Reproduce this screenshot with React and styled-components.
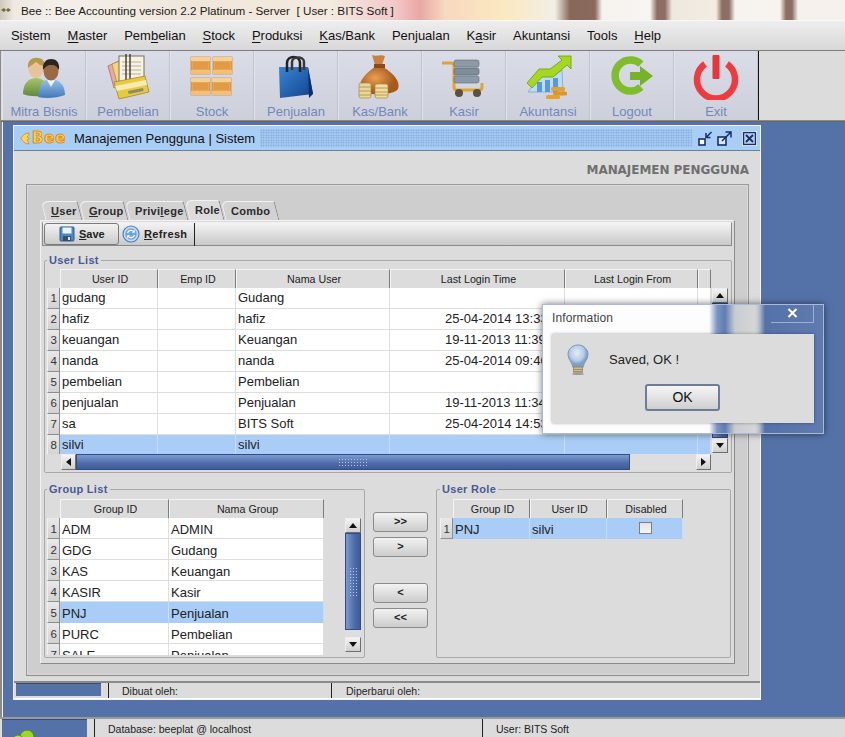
import React from 'react'
import styled, {createGlobalStyle} from 'styled-components'

const GlobalStyle = createGlobalStyle`
  html, body { margin: 0; padding: 0; background: #5572a8; }
  * { box-sizing: border-box; }
  body { font-family: "Liberation Sans", Arial, sans-serif; }
`

const Page = styled.div`
  position: relative;
  width: 845px;
  height: 737px;
  overflow: hidden;
  display: flex;
  flex-direction: column;
  background: #5572a8;
`

const TitleBar = styled.div`
  height: 20px;
  flex: none;
  display: flex;
  align-items: center;
  padding-left: 1px;
  gap: 10px;
  font-size: 11.7px;
  color: #1c1c1c;
  white-space: pre;
  background: linear-gradient(90deg,
    #cfc8bd 0, #efe9e2 14px, #f3efe9 60px, #f0e6da 200px, #f4ebe0 330px, #f2c9c8 395px, #e9a7a6 420px,
    #f7d9c0 445px, #fbe9c0 505px, #f2efe6 555px, #87675a 570px, #8a6a5c 595px, #f6f2ee 602px, #f8f5f2 650px,
    #8c6f62 657px, #8c6f62 665px, #efe8df 672px, #f3ece2 716px, #8c6f62 722px, #8c6f62 729px, #f7f4f0 735px,
    #f7f4f0 780px, #8c6f62 786px, #8c6f62 792px, #f6f1ec 798px, #f6f1ec 845px);
`

const MenuBar = styled.div`
  height: 31px;
  flex: none;
  display: flex;
  align-items: center;
  padding-left: 2.5px;
  background: linear-gradient(#eeeeee, #d8d8d8);
  border-top: 1px solid #f7f7f7;
  border-bottom: 1px solid #7c7c7c;
`

const MenuItem = styled.div`
  padding: 0 8.45px;
  font-size: 13px;
  color: #111;
  u { text-underline-offset: 2px; }
`

const ToolBar = styled.div`
  height: 70px;
  flex: none;
  display: flex;
  padding-left: 1px;
  background: #dcdcdc;
  border-bottom: 1px solid #8a8a8a;
  border-left: 1px solid #8a8a8a;
`

const ToolGroup = styled.div`
  display: flex;
  border-right: 1px solid #111;
`

const ToolButton = styled.div`
  width: 84px;
  display: flex;
  flex-direction: column;
  align-items: center;
  padding-top: 3px;
  background: linear-gradient(#dadde7, #cdd0da);
  border-right: 1px solid #c2c4cc;
  border-left: 1px solid #e2e4ea;
  font-size: 13px;
  color: #7387bb;
  svg { display: block; flex: none; }
  span { margin-top: 4px; line-height: 16px; }
`

const Desktop = styled.div`
  flex: 1;
  min-height: 0;
  padding: 3px 0 0 9px;
  border-left: 2px solid #8a8a8a;
  border-top: 1px solid #666;
  box-shadow: inset 1px 0 0 #f3f3f3;
  background: #5572a8;
`

const InnerWindow = styled.div`
  width: 748px;
  height: 575px;
  display: flex;
  flex-direction: column;
  background: #dcdcdc;
  border: 1px solid #f4f4f4;
  border-bottom-width: 2px;
  margin-left: 2px;
`

const WindowHeader = styled.div`
  height: 25px;
  flex: none;
  display: flex;
  align-items: center;
  padding: 0 3px 0 6px;
  background: #a9cef6;
  border-bottom: 1px solid #6d7f96;
  font-size: 13px;
  color: #111;
`

const Logo = styled.div`
  display: flex;
  align-items: center;
  width: 54px;
  font: bold 15px "DejaVu Sans", sans-serif;
  color: #ffd65a;
  letter-spacing: 0.8px;
  -webkit-text-stroke: 1px #e08f1c;
  svg { flex: none; margin-right: 2px; }
`

const Dots = styled.div`
  flex: 1;
  height: 18px;
  margin: 0 6px 0 5px;
  background-image: radial-gradient(#86a9d8 0.8px, transparent 0.9px);
  background-size: 2.5px 2.5px;
`

const WindowButtons = styled.div`
  display: flex;
  align-items: center;
  gap: 4px;
  svg:last-child { margin-left: 6px; }
`

const WindowBody = styled.div`
  flex: 1;
  min-height: 0;
  padding: 0 11px 0 12px;
  display: flex;
  flex-direction: column;
`

const PageHeading = styled.div`
  height: 33px;
  flex: none;
  padding-top: 12px;
  text-align: right;
  font: bold 12px "DejaVu Sans", sans-serif;
  letter-spacing: -0.05px;
  color: #6f6f6f;
  line-height: 15px;
`

const TabPanel = styled.div`
  height: 492px;
  flex: none;
  padding: 15px 13px 0 13px;
  background: #cecece;
  border: 1px solid #9a9a9a;
  border-bottom-color: #8a8a8a;
  box-shadow: inset 0 0 0 1px #d9d9d9;
`

const TabRow = styled.div`
  height: 20px;
  display: flex;
  padding-left: 3px;
`

const Tab = styled.div`
  position: relative;
  height: ${p => (p.$active ? '20px' : '19px')};
  margin-top: ${p => (p.$active ? '0' : '1px')};
  width: ${p => p.$width}px;
  padding-left: 8px;
  font-size: 11px;
  font-weight: bold;
  letter-spacing: 0.3px;
  line-height: 20px;
  white-space: nowrap;
  color: #2b2b2b;
  z-index: ${p => (p.$active ? 2 : 1)};
  &::before {
    content: '';
    position: absolute;
    inset: 0 1px 0 0;
    z-index: -1;
    background: ${p => (p.$active ? '#dcdcdc' : '#d2d2d2')};
    border-top: 1px solid #f2f2f2;
    border-left: 1px solid #f2f2f2;
    border-right: 1px solid #858585;
    border-radius: 7px 3px 0 0;
    transform: skewX(14deg);
  }
  u { text-underline-offset: 1px; }
`

const TabContent = styled.div`
  width: 695px;
  height: 444px;
  padding: 1px 2px 0 1px;
  background: #dcdcdc;
  border: 1px solid #f2f2f2;
  border-right-color: #8a8a8a;
  border-bottom-color: #8a8a8a;
`

const ActionBar = styled.div`
  width: 690px;
  height: 24px;
  display: flex;
  align-items: center;
  padding-left: 1px;
  background: linear-gradient(#f3f3f3, #c9c9c9);
  border: 1px solid #8a8a8a;
  border-top-color: #f0f0f0;
`

const ActionButton = styled.div`
  height: 22px;
  display: flex;
  align-items: center;
  gap: ${p => p.$gap}px;
  width: ${p => p.$width}px;
  padding-left: ${p => p.$inset}px;
  margin-right: ${p => p.$after}px;
  font-size: 11px;
  font-weight: bold;
  letter-spacing: ${p => (p.$raised ? 0 : 0.35)}px;
  color: #222;
  background: ${p => (p.$raised ? 'linear-gradient(#f2f2f2, #cbcbcb)' : 'transparent')};
  border: ${p => (p.$raised ? '1px solid #7a7a7a' : 'none')};
  border-radius: 3px;
  u { text-underline-offset: 1px; }
`

const ActionDivider = styled.div`
  width: 1px;
  height: 23px;
  background: #222;
`

const GroupBox = styled.fieldset`
  margin: ${p => p.$margin};
  padding: ${p => p.$pad};
  width: ${p => p.$width}px;
  height: ${p => p.$height}px;
  flex: none;
  min-width: 0;
  border: 1px solid #a9a9a9;
  border-radius: 2px;
`

const GroupTitle = styled.legend`
  margin-left: 0;
  padding: 0 2px;
  font-size: 11px;
  font-weight: bold;
  letter-spacing: 0.3px;
  line-height: 12px;
  color: #4a5a92;
`

const TableArea = styled.div`
  display: flex;
  align-items: flex-start;
`

const TableClip = styled.div`
  width: ${p => p.$width}px;
  height: ${p => p.$height}px;
  flex: none;
  overflow: hidden;
`

const Row = styled.div`
  display: grid;
  grid-template-columns: ${p => p.$cols};
  height: ${p => (p.$head ? '19px' : '21px')};
`

const HeadCell = styled.div`
  font-size: 10.7px;
  line-height: 18px;
  text-align: center;
  padding-left: 2px;
  color: #222;
  background: ${p => (p.$blank ? 'transparent' : '#dcdcdc')};
  border-top: ${p => (p.$blank ? 'none' : '1px solid #f4f4f4')};
  border-left: ${p => (p.$blank ? 'none' : '1px solid #f4f4f4')};
  border-right: ${p => (p.$blank ? 'none' : '1px solid #7d7d7d')};
  border-bottom: ${p => (p.$blank ? 'none' : '1px solid #6b6b6b')};
`

const RowNumber = styled.div`
  font-size: 11.5px;
  line-height: ${p => (p.$low ? 23 : 20)}px;
  text-align: right;
  padding-right: 2px;
  color: #333;
  background: linear-gradient(#e9e9e9, #d2d2d2);
  border-bottom: 1px solid #8d8d8d;
  border-right: 1px solid #8d8d8d;
  border-left: 1px solid #f2f2f2;
  overflow: hidden;
`

const Cell = styled.div`
  font-size: 13px;
  line-height: ${p => (p.$low ? 23 : 20)}px;
  padding-left: ${p => p.$indent || 2}px;
  color: #222;
  white-space: nowrap;
  overflow: hidden;
  background: ${p => (p.$selected ? '#a9cdf6' : '#fff')};
  border-right: 1px solid ${p => (p.$selected ? '#c4ddf8' : '#dedede')};
  border-bottom: 1px solid ${p => (p.$selected ? '#a9cdf6' : '#dedede')};
  display: ${p => (p.$center ? 'flex' : 'block')};
  justify-content: center;
  align-items: center;
`

const CheckBox = styled.div`
  width: 13px;
  height: 12px;
  background: linear-gradient(#e4e4e4, #f6f6f6);
  border: 1px solid #7d7d7d;
`

const VBar = styled.div`
  width: 16px;
  height: ${p => p.$height}px;
  margin: 19px 0 0 ${p => p.$left}px;
  flex: none;
  display: flex;
  flex-direction: column;
  background: #dcdcdc;
`

const HBar = styled.div`
  width: 650px;
  height: 16px;
  margin-left: 14px;
  display: flex;
  background: #dcdcdc;
`

const ScrollArrow = styled.div`
  width: ${p => (p.$horizontal ? 15 : 16)}px;
  height: ${p => (p.$horizontal ? 16 : 15)}px;
  flex: none;
  display: flex;
  align-items: center;
  justify-content: center;
  background: linear-gradient(#f3f3f3, #cfcfcf);
  border: 1px solid #6f6f6f;
  border-top-color: #eee;
  border-left-color: #eee;
`

const Arrow = styled.div`
  width: 0;
  height: 0;
  border-style: solid;
  border-color: transparent;
  ${p => p.$dir === 'up' && 'border-width: 0 4.5px 5px; border-bottom-color: #111;'}
  ${p => p.$dir === 'down' && 'border-width: 5px 4.5px 0; border-top-color: #111;'}
  ${p => p.$dir === 'left' && 'border-width: 4.5px 5px 4.5px 0; border-right-color: #111;'}
  ${p => p.$dir === 'right' && 'border-width: 4.5px 0 4.5px 5px; border-left-color: #111;'}
`

const Thumb = styled.div`
  flex: ${p => p.$grow};
  min-height: 0;
  display: flex;
  align-items: center;
  justify-content: center;
  background: ${p => (p.$horizontal
    ? 'linear-gradient(#7d9bd0, #4d6ba8 60%, #3f5c98)'
    : 'linear-gradient(90deg, #7d9bd0, #4d6ba8 60%, #3f5c98)')};
  border: 1px solid #2f4c86;
`

const Grip = styled.div`
  width: ${p => p.$w}px;
  height: ${p => p.$h}px;
  background-image: radial-gradient(#b6c8e6 0.7px, transparent 0.8px);
  background-size: 3px 3px;
`

const Track = styled.div`
  flex: ${p => p.$grow};
  background: #dedede;
`

const BottomRow = styled.div`
  display: flex;
  align-items: flex-start;
  margin-top: 10px;
`

const MoveColumn = styled.div`
  width: 55px;
  margin: 29px 8px 0 8px;
  flex: none;
  display: flex;
  flex-direction: column;
`

const MoveButton = styled.div`
  height: 20px;
  margin-top: ${p => p.$top}px;
  font-size: 11px;
  font-weight: bold;
  line-height: 17px;
  text-align: center;
  color: #222;
  background: linear-gradient(#f2f2f2, #cccccc);
  border: 1px solid #8a8a8a;
  border-radius: 3px;
`

const FrameStatus = styled.div`
  height: 17px;
  margin-top: auto;
  flex: none;
  display: flex;
  background: #dcdcdc;
  border-top: 2px solid #8a8a8a;
  box-shadow: 0 1px 0 #fff;
  font-size: 10.5px;
  line-height: 16px;
  color: #222;
`

const StatusBox = styled.div`
  width: ${p => p.$width}px;
  height: ${p => p.$height}px;
  margin-left: ${p => p.$left}px;
  flex: none;
  background: #5572a8;
  border-top: 1px solid #3c4c70;
  overflow: hidden;
  svg { display: block; margin: 9px 0 0 10px; }
`

const StatusCell = styled.div`
  width: ${p => p.$width}px;
  flex: none;
  padding-left: ${p => p.$pad}px;
  border-left: ${p => (p.$line ? '1px solid #222' : 'none')};
  margin-left: ${p => p.$left || 0}px;
`

const AppStatus = styled.div`
  height: 20px;
  flex: none;
  display: flex;
  background: #dcdcdc;
  border-top: 2px solid #9a9a9a;
  font-size: 10.5px;
  line-height: 20px;
  color: #222;
`

const Dialog = styled.div`
  position: absolute;
  left: 542px;
  top: 304px;
  width: 282px;
  height: 130px;
  padding: 0 9px 10px;
  display: flex;
  flex-direction: column;
  border: 1px solid #a9bbd9;
  box-shadow: 0 0 7px rgba(0, 0, 0, 0.55);
  background: linear-gradient(90deg,
    #fdfdfd 0, #fdfdfd 166px, #7d94c4 174px, #5f7cb2 182px, #c8ccd2 192px, #d6d6d6 212px, #b8c0cf 216px, #5572a8 222px, #5f7bb0 282px);
`

const DialogTop = styled.div`
  height: 29px;
  flex: none;
  display: flex;
  justify-content: space-between;
  font-size: 12px;
  letter-spacing: 0.1px;
  color: #444;
`

const DialogTitle = styled.div`
  padding-top: 6px;
`

const CloseBox = styled.div`
  width: 43px;
  height: 18px;
  margin-right: 0;
  display: flex;
  justify-content: center;
  padding: 0 0 0 1px;
  border-right: 1px solid #9db0d2;
  border-bottom: 1px solid #9db0d2;
  svg { margin-top: 3px; }
`

const DialogBody = styled.div`
  flex: 1;
  display: flex;
  flex-direction: column;
  background: #dcdcdc;
  box-shadow: 0 0 3px rgba(0, 0, 0, 0.35);
`

const MessageRow = styled.div`
  display: flex;
  align-items: flex-start;
  padding: 10px 0 0 15px;
  height: 50px;
  font-size: 13px;
  color: #222;
  span { margin: 8px 0 0 20px; }
`

const OkButton = styled.div`
  width: 75px;
  height: 27px;
  margin-left: 93px;
  text-align: center;
  font-size: 14px;
  line-height: 23px;
  color: #111;
  background: linear-gradient(#f6f6f6, #cfcfcf);
  border: 2px solid #6f7c98;
  border-radius: 3px;
`

const PeopleIcon = () => (
  <svg width="48" height="46" viewBox="0 0 48 46">
    <defs>
      <linearGradient id="shirtG" x1="0" y1="0" x2="0" y2="1"><stop offset="0" stopColor="#a9c46a" /><stop offset="1" stopColor="#5f8a3c" /></linearGradient>
      <linearGradient id="shirtB" x1="0" y1="0" x2="0" y2="1"><stop offset="0" stopColor="#9bc3ea" /><stop offset="1" stopColor="#3f78b8" /></linearGradient>
    </defs>
    <path d="M3 40c0-11 6-16 13-16s13 5 13 16c-7 3-19 3-26 0z" fill="url(#shirtG)" />
    <ellipse cx="16" cy="15" rx="7.5" ry="9" fill="#e8c39a" />
    <path d="M8 14c-1-9 6-11 10-10 5 0 7 4 6 8-4 0-6-3-8-4-2 2-5 3-8 6z" fill="#b59a4e" />
    <path d="M18 43c0-13 6-18 13-18s14 5 14 16c-8 3-19 4-27 2z" fill="url(#shirtB)" />
    <path d="M27 26l4 7 4-7z" fill="#eef3f8" />
    <ellipse cx="31" cy="17" rx="7.5" ry="9.5" fill="#9a6a45" />
    <path d="M23 16c-1-8 4-11 8-11 5 0 9 3 8 11-2-3-3-5-8-5-4 0-6 2-8 5z" fill="#2d2620" />
  </svg>
)

const PurchaseIcon = () => (
  <svg width="48" height="46" viewBox="0 0 48 46">
    <path d="M4 12l13-6 6 22-13 6z" fill="#e9a9a0" stroke="#a3625e" strokeWidth="0.7" />
    <path d="M8 10l13-5 6 22-13 6z" fill="#f3d67c" stroke="#a58a3e" strokeWidth="0.7" />
    <rect x="15" y="2" width="25" height="27" fill="#f7f3e4" stroke="#77705c" />
    <path d="M18 8h19M18 12h19M18 16h19M18 20h19" stroke="#b5ad95" />
    <path d="M22 0v28M26 0v28" stroke="#4d473b" strokeWidth="1.5" />
    <path d="M10 28l31-6 4 16-30 7z" fill="#e8c93f" stroke="#94802a" strokeWidth="0.7" />
    <path d="M11 32l31-6 1 5-30 6z" fill="#f6ecb0" />
    <path d="M24 37l15-3 .6 3-15 3z" fill="#8d8a6e" />
  </svg>
)

const Crate = ({x, y}) => (
  <g>
    <rect x={x} y={y} width="19" height="17" fill="#eaa650" stroke="#c08238" strokeWidth="0.7" />
    <rect x={x} y={y} width="19" height="4" fill="#f6d097" />
    <rect x={x} y={y + 13} width="19" height="4" fill="#f3c07c" />
    <rect x={x + 2} y={y + 5} width="15" height="7" fill="#e09a48" />
  </g>
)

const StockIcon = () => (
  <svg width="48" height="46" viewBox="0 0 48 46">
    <Crate x={3} y={3} />
    <Crate x={25} y={3} />
    <Crate x={3} y={24} />
    <Crate x={24} y={24} />
  </svg>
)

const BagIcon = () => (
  <svg width="48" height="46" viewBox="0 0 48 46">
    <defs>
      <linearGradient id="bagG" x1="0" y1="0" x2="1" y2="1"><stop offset="0" stopColor="#3a86d2" /><stop offset="1" stopColor="#10408e" /></linearGradient>
    </defs>
    <path d="M7 13h29l5 27-33 4z" fill="url(#bagG)" />
    <path d="M36 13l5 27-4 4-1-31z" fill="#0d2f6d" />
    <path d="M15 18v-9c0-8 13-8 13 0v9" fill="none" stroke="#222" strokeWidth="2.5" />
    <path d="M20 16v-8c0-6 12-6 12 0v8" fill="none" stroke="#3a3a3a" strokeWidth="2.5" />
  </svg>
)

const MoneyIcon = () => (
  <svg width="48" height="46" viewBox="0 0 48 46">
    <defs>
      <radialGradient id="sack" cx="0.4" cy="0.4"><stop offset="0" stopColor="#e9a055" /><stop offset="1" stopColor="#a8591e" /></radialGradient>
    </defs>
    <path d="M16 1c4 2 8-1 13 1l-3 9h-7z" fill="#c98040" />
    <path d="M19 13c-8 5-17 14-15 22 2 7 34 7 38 0 3-9-7-17-15-22z" fill="url(#sack)" />
    <rect x="18" y="10" width="11" height="4" fill="#8a4a1a" />
    <rect x="3" y="29" width="12" height="15" rx="2" fill="#e8d69a" stroke="#a58a3e" strokeWidth="0.7" />
    <rect x="19" y="30" width="13" height="14" rx="2" fill="#efdca0" stroke="#a58a3e" strokeWidth="0.7" />
    <path d="M3 33h12M3 37h12M3 41h12M19 34h13M19 38h13M19 41h13" stroke="#b89c52" />
  </svg>
)

const CartIcon = () => (
  <svg width="48" height="46" viewBox="0 0 48 46">
    <path d="M2 9h9c2 0 3 1 3 3v21c0 2 1 3 3 3h22c2 0 3-1 3-3v-4" fill="none" stroke="#e0a431" strokeWidth="3" />
    <rect x="14" y="6" width="25" height="7" rx="2" fill="#8b9aa6" stroke="#5e6b75" strokeWidth="0.6" />
    <rect x="14" y="14" width="25" height="7" rx="2" fill="#7d8d99" stroke="#56636d" strokeWidth="0.6" />
    <rect x="14" y="22" width="25" height="7" rx="2" fill="#8b9aa6" stroke="#5e6b75" strokeWidth="0.6" />
    <circle cx="19" cy="39" r="4" fill="#5a5140" />
    <circle cx="37" cy="39" r="4" fill="#5a5140" />
  </svg>
)

const ChartIcon = () => (
  <svg width="48" height="46" viewBox="0 0 48 46">
    <path d="M4 38l12-16 14 0 8-6 1 22z" fill="#bcdcf4" stroke="#6ea3d0" strokeWidth="0.7" />
    <rect x="13" y="28" width="5" height="10" fill="#5d98d6" />
    <rect x="21" y="26" width="5" height="12" fill="#5d98d6" />
    <rect x="29" y="24" width="5" height="14" fill="#5d98d6" />
    <path d="M3 29l12-14h11l12-9-4-4h13v13l-4-4-14 12h-11l-10 11z" fill="#a5d81f" stroke="#6d9a14" strokeWidth="0.8" />
    <rect x="27" y="33" width="14" height="4" rx="1.5" fill="#e3a32c" />
    <rect x="29" y="37.5" width="14" height="4" rx="1.5" fill="#d9962a" />
    <rect x="22" y="41" width="14" height="4" rx="1.5" fill="#e3a32c" />
  </svg>
)

const LogoutIcon = () => (
  <svg width="48" height="46" viewBox="0 0 48 46">
    <path d="M33 10A15.5 15.5 0 1 0 33 33" fill="none" stroke="#7fbd2c" strokeWidth="7.5" />
    <path d="M22 18h10v-6l13 10-13 10v-6h-10z" fill="#76b32a" />
  </svg>
)

const PowerIcon = () => (
  <svg width="48" height="46" viewBox="0 0 48 46">
    <path d="M13 10A19 19 0 1 0 35 10" fill="none" stroke="#ee3b3f" strokeWidth="6.5" />
    <rect x="20.5" y="1" width="7" height="24" rx="1" fill="#e8353a" />
  </svg>
)

const WingIcon = () => (
  <svg width="10" height="13" viewBox="0 0 10 13">
    <path d="M9 1C5 1 3 3 1 6.500c2 3 4 5.500 8 5.500-1-2-1-3-2-4 1-.5 2-.5 2-1.500s-1-1-2-1.500c1-1 2-2 2-3.500z" fill="#ffd65a" stroke="#e08f1c" />
  </svg>
)

const RestoreIcon = () => (
  <svg width="15" height="15" viewBox="0 0 15 15">
    <rect x="1" y="8" width="6" height="6" fill="#fff" stroke="#14306a" strokeWidth="1.6" />
    <path d="M13.5 1L8 6.5M8 2v4.5h4.5" fill="none" stroke="#14306a" strokeWidth="1.5" />
  </svg>
)

const MaximizeIcon = () => (
  <svg width="15" height="15" viewBox="0 0 15 15">
    <rect x="1" y="6" width="8" height="8" fill="#d7e5f6" stroke="#14306a" strokeWidth="1.6" />
    <path d="M5 10L14 1M8.500 1H14v5.500" fill="none" stroke="#14306a" strokeWidth="1.5" />
  </svg>
)

const CloseIcon = () => (
  <svg width="15" height="15" viewBox="0 0 15 15">
    <rect x="0.5" y="0.5" width="14" height="14" fill="#eaf2fb" stroke="#ffffff" />
    <rect x="1.5" y="1.5" width="12" height="12" fill="#b9cde6" stroke="#14306a" strokeWidth="1.4" />
    <path d="M4 4l7 7M11 4l-7 7" stroke="#14306a" strokeWidth="1.8" />
  </svg>
)

const SaveIcon = () => (
  <svg width="16" height="16" viewBox="0 0 16 16">
    <rect x="1" y="1" width="14" height="14" rx="1" fill="#4f86c6" stroke="#2e5a94" />
    <rect x="3.5" y="1.500" width="9" height="6" fill="#eef3f8" />
    <rect x="4" y="10" width="8" height="5" fill="#3c4f6a" />
    <rect x="9" y="11" width="2" height="3" fill="#dfe6ef" />
  </svg>
)

const RefreshIcon = () => (
  <svg width="18" height="18" viewBox="0 0 18 18">
    <circle cx="9" cy="9" r="8" fill="#c5dcf4" stroke="#4a7fc0" strokeWidth="1.2" />
    <circle cx="9" cy="9" r="5.8" fill="#6ea4dc" />
    <path d="M5.5 8A3.7 3.7 0 0 1 12 6.8M12.5 10A3.7 3.7 0 0 1 6 11.2" fill="none" stroke="#fff" strokeWidth="1.3" />
    <path d="M12.8 4.8v3h-3zM5.2 13.2v-3h3z" fill="#fff" />
  </svg>
)

const XIcon = () => (
  <svg width="11" height="10" viewBox="0 0 11 10">
    <path d="M1.5 1l8 8M9.5 1l-8 8" stroke="#6a7486" strokeWidth="3.2" />
    <path d="M1.5 1l8 8M9.5 1l-8 8" stroke="#ffffff" strokeWidth="2" />
  </svg>
)

const BulbIcon = () => (
  <svg width="22" height="31" viewBox="0 0 22 31">
    <defs>
      <radialGradient id="glass" cx="0.45" cy="0.35"><stop offset="0" stopColor="#e4edf8" /><stop offset="0.7" stopColor="#b6cbe6" /><stop offset="1" stopColor="#7f9fc8" /></radialGradient>
    </defs>
    <path d="M11 1C5 1 1 5.5 1 10.5c0 5 4 7 5 13h10c1-6 5-8 5-13C21 5.5 17 1 11 1z" fill="url(#glass)" stroke="#7d98bd" />
    <rect x="6.5" y="23" width="9" height="6" rx="1" fill="#c9bd8e" stroke="#857a50" strokeWidth="0.7" />
    <path d="M7 25.500h8M7 27.500h8" stroke="#8b8058" strokeWidth="0.7" />
    <ellipse cx="11" cy="30" rx="6" ry="1" fill="#9a9a9a" />
  </svg>
)

const CloverIcon = () => (
  <svg width="26" height="16" viewBox="0 0 26 16">
    <circle cx="15" cy="8" r="7" fill="#9cd62a" stroke="#4d8a18" />
    <circle cx="6" cy="11" r="5" fill="#a6e040" stroke="#4d8a18" />
    <circle cx="22" cy="12" r="3.500" fill="#e6efd2" />
  </svg>
)

const menus = [
  ['S', 'i', 'stem'], ['', 'M', 'aster'], ['Pem', 'b', 'elian'], ['', 'S', 'tock'], ['', 'P', 'roduksi'],
  ['', 'K', 'as/Bank'], ['Penjualan', '', ''], ['K', 'a', 'sir'], ['Akuntansi', '', ''], ['Tools', '', ''], ['', 'H', 'elp'],
]

const tools = [
  ['Mitra Bisnis', PeopleIcon], ['Pembelian', PurchaseIcon], ['Stock', StockIcon], ['Penjualan', BagIcon],
  ['Kas/Bank', MoneyIcon], ['Kasir', CartIcon], ['Akuntansi', ChartIcon], ['Logout', LogoutIcon], ['Exit', PowerIcon],
]

const tabs = [
  ['', 'U', 'ser', 38], ['', 'G', 'roup', 46], ['Privi', 'l', 'ege', 60], ['Role', '', '', 36], ['Combo', '', '', 55],
]

const users = [
  ['gudang', 'Gudang', ''],
  ['hafiz', 'hafiz', '25-04-2014 13:33'],
  ['keuangan', 'Keuangan', '19-11-2013 11:39'],
  ['nanda', 'nanda', '25-04-2014 09:46'],
  ['pembelian', 'Pembelian', ''],
  ['penjualan', 'Penjualan', '19-11-2013 11:34'],
  ['sa', 'BITS Soft', '25-04-2014 14:53'],
  ['silvi', 'silvi', ''],
]

const groups = [
  ['ADM', 'ADMIN'], ['GDG', 'Gudang'], ['KAS', 'Keuangan'], ['KASIR', 'Kasir'],
  ['PNJ', 'Penjualan'], ['PURC', 'Pembelian'], ['SALE', 'Penjualan'],
]

const userCols = '13px 98px 78px 154px 175px 133px 13px'
const groupCols = '13px 109px 155px'
const roleCols = '13px 77px 77px 76px'

const App = () => (
  <Page>
    <GlobalStyle />
    <TitleBar>
      <svg width="10" height="6" viewBox="0 0 10 6"><path d="M0 3l3-2 2 2 2-2 3 2-3 2-2-2-2 2z" fill="#7a6a3a" /></svg>
      {'Bee :: Bee Accounting version 2.2 Platinum - Server  [ User : BITS Soft ]'}
    </TitleBar>

    <MenuBar>
      {menus.map(([a, key, b]) => (
        <MenuItem key={a + key + b}>{a}{key && <u>{key}</u>}{b}</MenuItem>
      ))}
    </MenuBar>

    <ToolBar>
      <ToolGroup>
        {tools.map(([label, Icon]) => (
          <ToolButton key={label}>
            <Icon />
            <span>{label}</span>
          </ToolButton>
        ))}
      </ToolGroup>
    </ToolBar>

    <Desktop>
      <InnerWindow>
        <WindowHeader>
          <Logo><WingIcon />Bee</Logo>
          Manajemen Pengguna | Sistem
          <Dots />
          <WindowButtons>
            <RestoreIcon />
            <MaximizeIcon />
            <CloseIcon />
          </WindowButtons>
        </WindowHeader>

        <WindowBody>
          <PageHeading>MANAJEMEN PENGGUNA</PageHeading>
          <TabPanel>
            <TabRow>
              {tabs.map(([a, key, b, width]) => (
                <Tab key={a + key + b} $width={width} $active={a === 'Role'}>
                  {a}{key && <u>{key}</u>}{b}
                </Tab>
              ))}
            </TabRow>
            <TabContent>
              <ActionBar>
                <ActionButton $raised $width={75} $inset={14} $gap={4} $after={3}>
                  <SaveIcon /><span><u>S</u>ave</span>
                </ActionButton>
                <ActionButton $width={72} $inset={0} $gap={4} $after={0}>
                  <RefreshIcon /><span><u>R</u>efresh</span>
                </ActionButton>
                <ActionDivider />
              </ActionBar>

              <GroupBox $width={688} $height={219} $margin="8px 0 0 2px" $pad="3px 3px 0 2px">
                <GroupTitle>User List</GroupTitle>
                <TableArea>
                  <TableClip $width={664} $height={185}>
                    <Row $head $cols={userCols}>
                      <HeadCell $blank />
                      <HeadCell>User ID</HeadCell>
                      <HeadCell>Emp ID</HeadCell>
                      <HeadCell>Nama User</HeadCell>
                      <HeadCell>Last Login Time</HeadCell>
                      <HeadCell>Last Login From</HeadCell>
                      <HeadCell />
                    </Row>
                    {users.map(([id, name, time], i) => {
                      const selected = id === 'silvi'
                      return (
                        <Row key={id} $cols={userCols}>
                          <RowNumber>{i + 1}</RowNumber>
                          <Cell $selected={selected}>{id}</Cell>
                          <Cell $selected={selected} />
                          <Cell $selected={selected}>{name}</Cell>
                          <Cell $selected={selected} $indent={55}>{time}</Cell>
                          <Cell $selected={selected} />
                          <Cell $selected={selected} />
                        </Row>
                      )
                    })}
                  </TableClip>
                  <VBar $height={165} $left={1}>
                    <ScrollArrow><Arrow $dir="up" /></ScrollArrow>
                    <Thumb $grow={1} />
                    <ScrollArrow><Arrow $dir="down" /></ScrollArrow>
                  </VBar>
                </TableArea>
                <HBar>
                  <ScrollArrow $horizontal><Arrow $dir="left" /></ScrollArrow>
                  <Thumb $horizontal $grow={554}><Grip $w={30} $h={9} /></Thumb>
                  <Track $grow={66} />
                  <ScrollArrow $horizontal><Arrow $dir="right" /></ScrollArrow>
                </HBar>
              </GroupBox>

              <BottomRow>
                <GroupBox $width={321} $height={175} $margin="0 0 0 2px" $pad="4px 2px 0 2px">
                  <GroupTitle>Group List</GroupTitle>
                  <TableArea>
                    <TableClip $width={277} $height={156}>
                      <Row $head $cols={groupCols}>
                        <HeadCell $blank />
                        <HeadCell>Group ID</HeadCell>
                        <HeadCell>Nama Group</HeadCell>
                      </Row>
                      {groups.map(([id, name], i) => (
                        <Row key={id} $cols={groupCols}>
                          <RowNumber $low>{i + 1}</RowNumber>
                          <Cell $low $selected={id === 'PNJ'}>{id}</Cell>
                          <Cell $low $selected={id === 'PNJ'}>{name}</Cell>
                        </Row>
                      ))}
                    </TableClip>
                    <VBar $height={134} $left={21}>
                      <ScrollArrow><Arrow $dir="up" /></ScrollArrow>
                      <Thumb $grow={1}><Grip $w={9} $h={30} /></Thumb>
                      <Track $grow="0 0 7px" />
                      <ScrollArrow><Arrow $dir="down" /></ScrollArrow>
                    </VBar>
                  </TableArea>
                </GroupBox>

                <MoveColumn>
                  <MoveButton $top={0}>&gt;&gt;</MoveButton>
                  <MoveButton $top={5}>&gt;</MoveButton>
                  <MoveButton $top={26}>&lt;</MoveButton>
                  <MoveButton $top={5}>&lt;&lt;</MoveButton>
                </MoveColumn>

                <GroupBox $width={295} $height={175} $margin="0" $pad="4px 0 0 3px">
                  <GroupTitle>User Role</GroupTitle>
                  <Row $head $cols={roleCols}>
                    <HeadCell $blank />
                    <HeadCell>Group ID</HeadCell>
                    <HeadCell>User ID</HeadCell>
                    <HeadCell>Disabled</HeadCell>
                  </Row>
                  <Row $cols={roleCols}>
                    <RowNumber $low>1</RowNumber>
                    <Cell $low $selected>PNJ</Cell>
                    <Cell $low $selected>silvi</Cell>
                    <Cell $selected $center><CheckBox /></Cell>
                  </Row>
                </GroupBox>
              </BottomRow>
            </TabContent>
          </TabPanel>
        </WindowBody>

        <FrameStatus>
          <StatusBox $width={85} $height={13} $left={2} />
          <StatusCell $width={223} $pad={13} $line $left={7}>Dibuat oleh:</StatusCell>
          <StatusCell $width={300} $pad={14} $line>Diperbarui oleh:</StatusCell>
        </FrameStatus>
      </InnerWindow>
    </Desktop>

    <AppStatus>
      <StatusBox $width={85} $height={18} $left={2}><CloverIcon /></StatusBox>
      <StatusCell $width={388} $pad={13} $line $left={7}>Database: beeplat @ localhost</StatusCell>
      <StatusCell $width={300} $pad={13} $line>User: BITS Soft</StatusCell>
    </AppStatus>

    <Dialog>
      <DialogTop>
        <DialogTitle>Information</DialogTitle>
        <CloseBox><XIcon /></CloseBox>
      </DialogTop>
      <DialogBody>
        <MessageRow>
          <BulbIcon />
          <span>Saved, OK !</span>
        </MessageRow>
        <OkButton>OK</OkButton>
      </DialogBody>
    </Dialog>
  </Page>
)

export default App
